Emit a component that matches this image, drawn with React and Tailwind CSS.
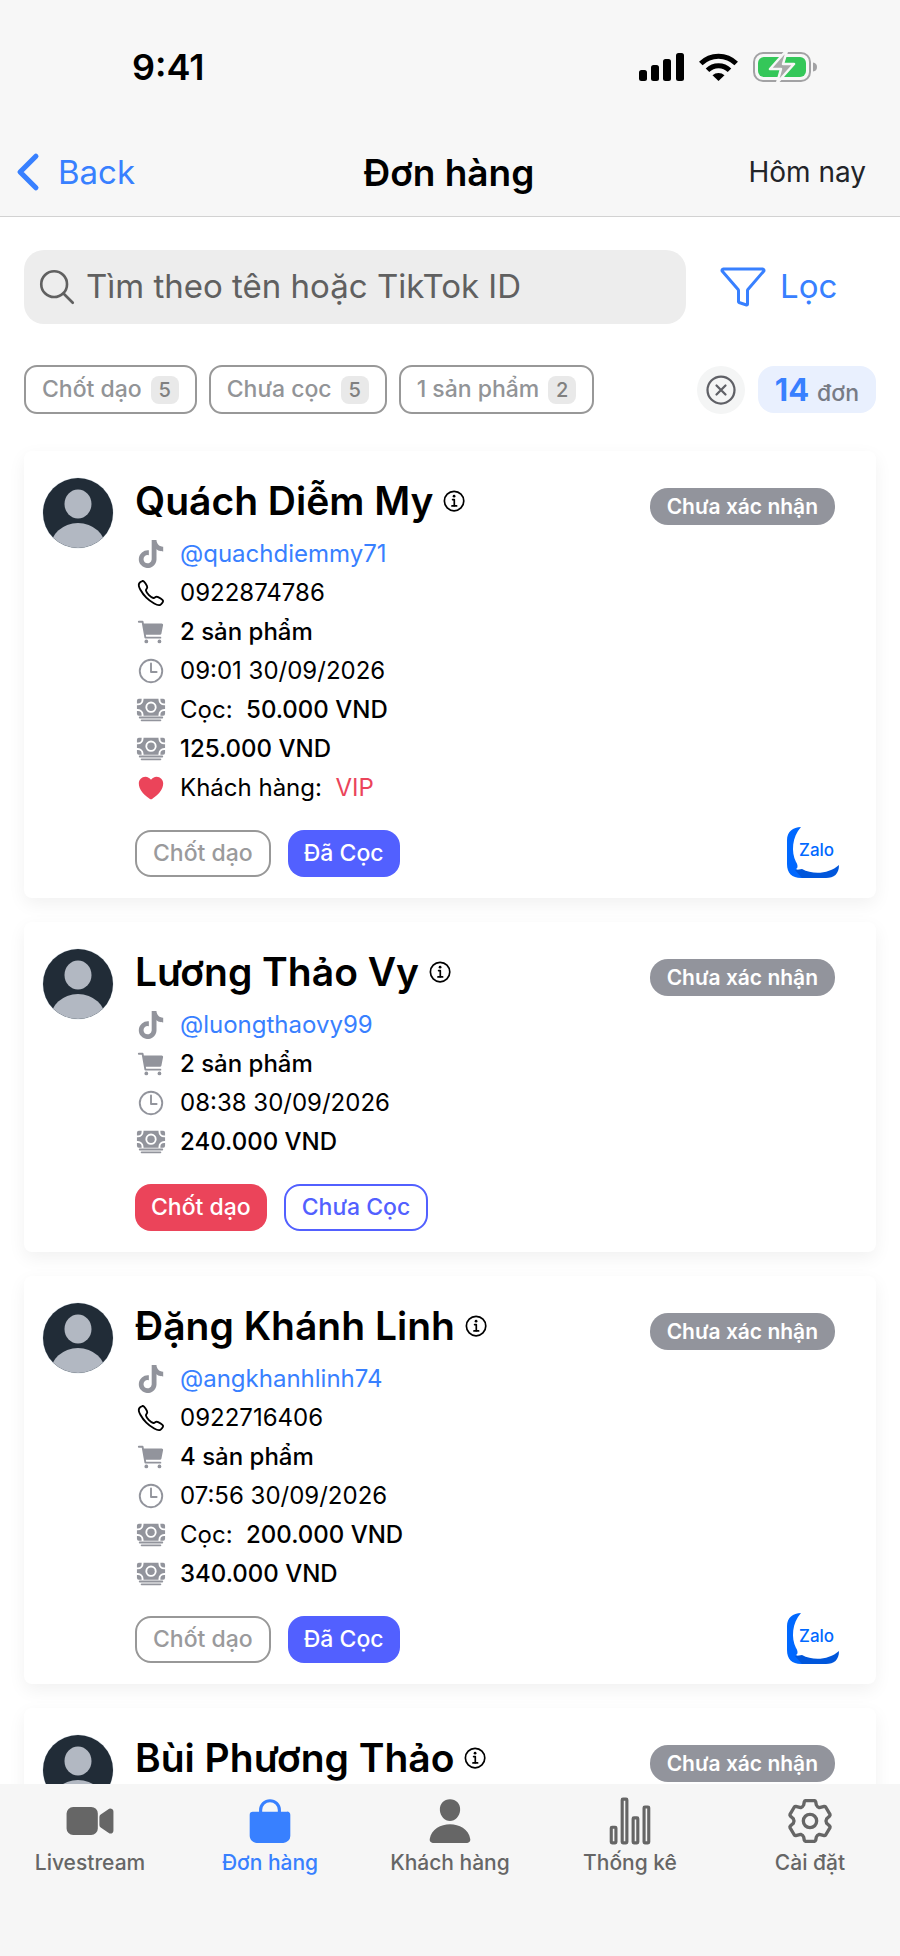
import React, { useState } from 'react';
import {
  IoBag,
  IoCallOutline,
  IoCart,
  IoCash,
  IoChevronBack,
  IoCloseCircleOutline,
  IoFunnelOutline,
  IoHeart,
  IoInformationCircleOutline,
  IoLogoTiktok,
  IoPerson,
  IoSearchOutline,
  IoStatsChartOutline,
  IoTimeOutline,
  IoVideocam,
} from 'react-icons/io5';

const orders = [
  {
    name: 'Quách Diễm My',
    tiktok: '@quachdiemmy71',
    phone: '0922874786',
    products: 2,
    time: '09:01 30/09/2026',
    deposit: '50.000 VND',
    total: '125.000 VND',
    customerType: 'VIP',
    deposited: true,
  },
  {
    name: 'Lương Thảo Vy',
    tiktok: '@luongthaovy99',
    products: 2,
    time: '08:38 30/09/2026',
    total: '240.000 VND',
    flagged: true,
  },
  {
    name: 'Đặng Khánh Linh',
    tiktok: '@angkhanhlinh74',
    phone: '0922716406',
    products: 4,
    time: '07:56 30/09/2026',
    deposit: '200.000 VND',
    total: '340.000 VND',
    deposited: true,
  },
  // details not loaded yet
  { name: 'Bùi Phương Thảo' },
];

const filters = [
  { label: 'Chốt dạo', count: 5 },
  { label: 'Chưa cọc', count: 5 },
  { label: '1 sản phẩm', count: 2 },
];

const GearIcon = ({ className }) => (
  <svg viewBox="-75 -75 150 150" className={className} fill="none" stroke="currentColor" strokeWidth="10" strokeLinejoin="round">
    <path d="M-14-61H14Q16-61 17-58L19-48Q21-43 28-40L43-44Q45-44 47-42L60-20Q61-17 59-15L50-7Q46 0 50 7L59 15Q61 17 60 20L47 42Q45 44 43 44L28 40Q21 43 19 48L17 58Q16 61 14 61H-14Q-16 61-17 58L-19 48Q-21 43-28 40L-43 44Q-45 44-47 42L-60 20Q-61 17-59 15L-50 7Q-46 0-50-7L-59-15Q-61-17-60-20L-47-42Q-45-44-43-44L-28-40Q-21-43-19-48L-17-58Q-16-61-14-61Z" />
    <circle r="20" />
  </svg>
);

const Avatar = () => (
  <svg viewBox="0 0 72 72" className="size-[72px] shrink-0">
    <defs>
      <clipPath id="avatar-clip">
        <circle cx="36" cy="36" r="35" />
      </clipPath>
    </defs>
    <circle cx="36" cy="36" r="35.5" fill="#dfe6ec" />
    <g clipPath="url(#avatar-clip)">
      <rect width="72" height="72" fill="#212c37" />
      <ellipse cx="36" cy="27" rx="13.5" ry="14.5" fill="#b2b8c2" />
      <ellipse cx="36" cy="72" rx="28" ry="26" fill="#b2b8c2" />
    </g>
  </svg>
);

const ZaloLogo = () => (
  <svg viewBox="0 0 52 53" className="h-[53px] w-[52px]">
    <path d="M14 0C6 0 0 5 0 13V37C0 46 5 51 14 51L24 51L9 42C11 41 11 38 9 35C4 25 5 10 14 0Z" fill="#0068ff" />
    <path d="M8 43C11 43 13 42 15 42C26 48 42 47 52 38C52 47 47 51 39 51H15Z" fill="#0056db" />
    <text x="12" y="29" fontSize="17" fontWeight="500" fill="#0068ff" fontFamily="Inter, sans-serif">Zalo</text>
  </svg>
);

const StatusBar = () => (
  <div className="flex h-[134px] items-center justify-between pr-[82px] pl-[132px]">
    <span className="text-[36px] leading-none font-semibold">9:41</span>
    <div className="flex items-center gap-[15px]">
      <svg viewBox="0 0 45 28" className="h-[28px] w-[45px]">
        <rect x="0" y="17" width="8" height="11" rx="2.5" />
        <rect x="12" y="12" width="8" height="16" rx="2.5" />
        <rect x="24" y="6" width="8" height="22" rx="2.5" />
        <rect x="37" y="0" width="8" height="28" rx="2.5" />
      </svg>
      <svg viewBox="0 0 39 28" className="h-[28px] w-[39px]" fill="none" stroke="black" strokeWidth="5">
        <path d="M1.800 10.500A25 25 0 0 1 37.200 10.500" />
        <path d="M8.500 17.300A15.500 15.500 0 0 1 30.500 17.300" />
        <path d="M13.500 22.300A9 9 0 0 1 25.500 22.300L19.500 28Z" fill="black" stroke="none" />
      </svg>
      <svg viewBox="0 0 65 32" className="h-[32px] w-[65px]">
        <rect x="1" y="2" width="56" height="28" rx="9" fill="none" stroke="#a2a2a4" strokeWidth="2" />
        <path d="M60 11.500Q64 12 64 16T60 20.500Z" fill="#a2a2a4" />
        <rect x="5" y="6" width="48" height="20" rx="6" fill="#34c759" />
        <path d="M33 0L17 18H28L24 32L41 13H30L34 0Z" fill="#a9a9a9" stroke="#f7f7f7" strokeWidth="2.500" strokeLinejoin="round" />
      </svg>
    </div>
  </div>
);

const InfoRow = ({ icon: Icon, iconClass = 'text-[#92949c]', children }) => (
  <li className="flex h-[39px] items-center gap-[14px] text-[24px]">
    <Icon className={`size-[30px] shrink-0 ${iconClass}`} />
    {children}
  </li>
);

const OrderDetails = ({ order }) => (
  <>
    <ul className="mt-[9px] pl-px">
      <InfoRow icon={IoLogoTiktok}>
        <a href="#tiktok" className="text-[#3880ff]">{order.tiktok}</a>
      </InfoRow>
      {order.phone && (
        <InfoRow icon={IoCallOutline} iconClass="text-black">{order.phone}</InfoRow>
      )}
      <InfoRow icon={IoCart}>
        <span className="font-medium">{order.products} sản phẩm</span>
      </InfoRow>
      <InfoRow icon={IoTimeOutline}>{order.time}</InfoRow>
      {order.deposit && (
        <InfoRow icon={IoCash}>
          <span>Cọc: &nbsp;<span className="font-medium">{order.deposit}</span></span>
        </InfoRow>
      )}
      <InfoRow icon={IoCash}>
        <span className="font-medium">{order.total}</span>
      </InfoRow>
      {order.customerType && (
        <InfoRow icon={IoHeart} iconClass="text-[#eb445a]">
          <span>Khách hàng: &nbsp;<span className="text-[#eb445a]">{order.customerType}</span></span>
        </InfoRow>
      )}
    </ul>
    <div className="mt-[23px] flex h-[47px] items-center gap-[17px] pr-[37px] text-[23px] font-medium">
      {order.flagged ? (
        <button type="button" className="h-full rounded-2xl bg-[#eb445a] px-4 text-white">Chốt dạo</button>
      ) : (
        <button type="button" className="h-full rounded-2xl border-2 border-[#989898] px-4 text-[#9a9a9c]">Chốt dạo</button>
      )}
      {order.deposited ? (
        <button type="button" className="h-full rounded-2xl bg-[#5260ff] px-4 text-white">Đã Cọc</button>
      ) : (
        <button type="button" className="h-full rounded-2xl border-2 border-[#5260ff] px-4 text-[#5260ff]">Chưa Cọc</button>
      )}
      {order.phone && (
        <a href="#zalo" aria-label="Zalo" className="ml-auto">
          <ZaloLogo />
        </a>
      )}
    </div>
  </>
);

const OrderCard = ({ order }) => (
  <article className="flex shrink-0 gap-[21px] rounded-lg bg-white pt-[26px] pb-[21px] pl-[18px] shadow-[0_6px_18px_rgba(0,0,0,0.06)]">
    <Avatar />
    <div className="min-w-0 flex-1">
      <div className="flex h-12 items-center justify-between pr-[41px]">
        <div className="flex items-center gap-2">
          <h2 className="text-[39px] leading-[48px] font-semibold whitespace-nowrap">{order.name}</h2>
          <button type="button" aria-label="Chi tiết">
            <IoInformationCircleOutline className="size-[27px]" />
          </button>
        </div>
        <span className="mt-[11px] flex h-[37px] items-center rounded-[18px] bg-[#92949c] px-[17px] text-[21px] leading-none font-semibold whitespace-nowrap text-white">
          Chưa xác nhận
        </span>
      </div>
      {order.tiktok && <OrderDetails order={order} />}
    </div>
  </article>
);

const tabs = [
  { label: 'Livestream', icon: IoVideocam },
  { label: 'Đơn hàng', icon: IoBag },
  { label: 'Khách hàng', icon: IoPerson },
  { label: 'Thống kê', icon: IoStatsChartOutline },
  { label: 'Cài đặt', icon: GearIcon },
];

const App = () => {
  const [search, setSearch] = useState('');
  const [activeTab, setActiveTab] = useState('Đơn hàng');

  return (
    <div className="flex h-screen flex-col overflow-hidden bg-white font-['Inter',sans-serif] text-black">
      <header className="shrink-0 border-b border-[#d2d2d2] bg-[#f7f7f7]">
        <StatusBar />
        <div className="grid h-[82px] grid-cols-3 items-center pr-[34px] pb-[6px]">
          <button type="button" className="flex items-center gap-[2px] text-[33px] leading-none text-[#3880ff]">
            <IoChevronBack className="size-[56px]" />
            Back
          </button>
          <h1 className="pl-8 text-center text-[37px] leading-none font-semibold whitespace-nowrap">Đơn hàng</h1>
          <button type="button" className="justify-self-end text-[28px] leading-none text-[#222428]">Hôm nay</button>
        </div>
      </header>

      <main className="min-h-0 flex-1 overflow-hidden px-6 pt-[33px]">
        <div className="flex items-center">
          <label className="flex h-[74px] flex-1 items-center gap-[8px] rounded-[20px] bg-[#ededed] pl-3 text-[#606060]">
            <IoSearchOutline className="size-[42px] shrink-0" />
            <input
              type="text"
              name="search"
              aria-label="Tìm kiếm"
              placeholder="Tìm theo tên hoặc TikTok ID"
              value={search}
              onChange={(event) => setSearch(event.target.value)}
              className="w-full bg-transparent text-[33px] outline-none placeholder:text-[#606060]"
            />
          </label>
          <button type="button" className="flex w-[190px] items-center gap-[13px] pl-[33px] text-[33px] text-[#3880ff]">
            <IoFunnelOutline className="size-[48px]" />
            Lọc
          </button>
        </div>

        <div className="mt-[41px] flex h-[49px] items-center">
          <div className="flex h-full gap-[12px]">
            {filters.map((filter) => (
              <button
                key={filter.label}
                type="button"
                className="flex h-full items-center gap-[9px] rounded-[13px] border-2 border-[#989898] px-4 text-[23px] font-medium whitespace-nowrap text-[#929497]"
              >
                {filter.label}
                <span className="flex size-7 items-center justify-center rounded-lg bg-[#e9e9e9] text-[20px] text-[#808080]">
                  {filter.count}
                </span>
              </button>
            ))}
          </div>
          <button type="button" aria-label="Xóa bộ lọc" className="ml-auto flex size-12 items-center justify-center rounded-full bg-[#f4f5f5] text-[#5f6066]">
            <IoCloseCircleOutline className="size-[36px]" />
          </button>
          <div className="ml-[13px] flex h-[47px] items-baseline gap-2 rounded-2xl bg-[#e9f0fe] px-[17px] leading-[47px]">
            <span className="text-[31px] font-bold text-[#3880ff]">14</span>
            <span className="text-[23px] font-medium text-[#777b85]">đơn</span>
          </div>
        </div>

        <div className="mt-[37px] flex flex-col gap-6">
          {orders.map((order) => (
            <OrderCard key={order.name} order={order} />
          ))}
        </div>
      </main>

      <nav className="relative grid h-[172px] shrink-0 grid-cols-5 items-start bg-[#f6f6f6] pt-[12px]">
        {tabs.map(({ label, icon: Icon }) => (
          <button
            key={label}
            type="button"
            onClick={() => setActiveTab(label)}
            className={`flex flex-col items-center gap-[5px] text-[21px] leading-[24px] font-medium ${activeTab === label ? 'text-[#3880ff]' : 'text-[#666666]'}`}
          >
            <Icon className="size-[50px]" />
            {label}
          </button>
        ))}
      </nav>
    </div>
  );
};

export default App;
